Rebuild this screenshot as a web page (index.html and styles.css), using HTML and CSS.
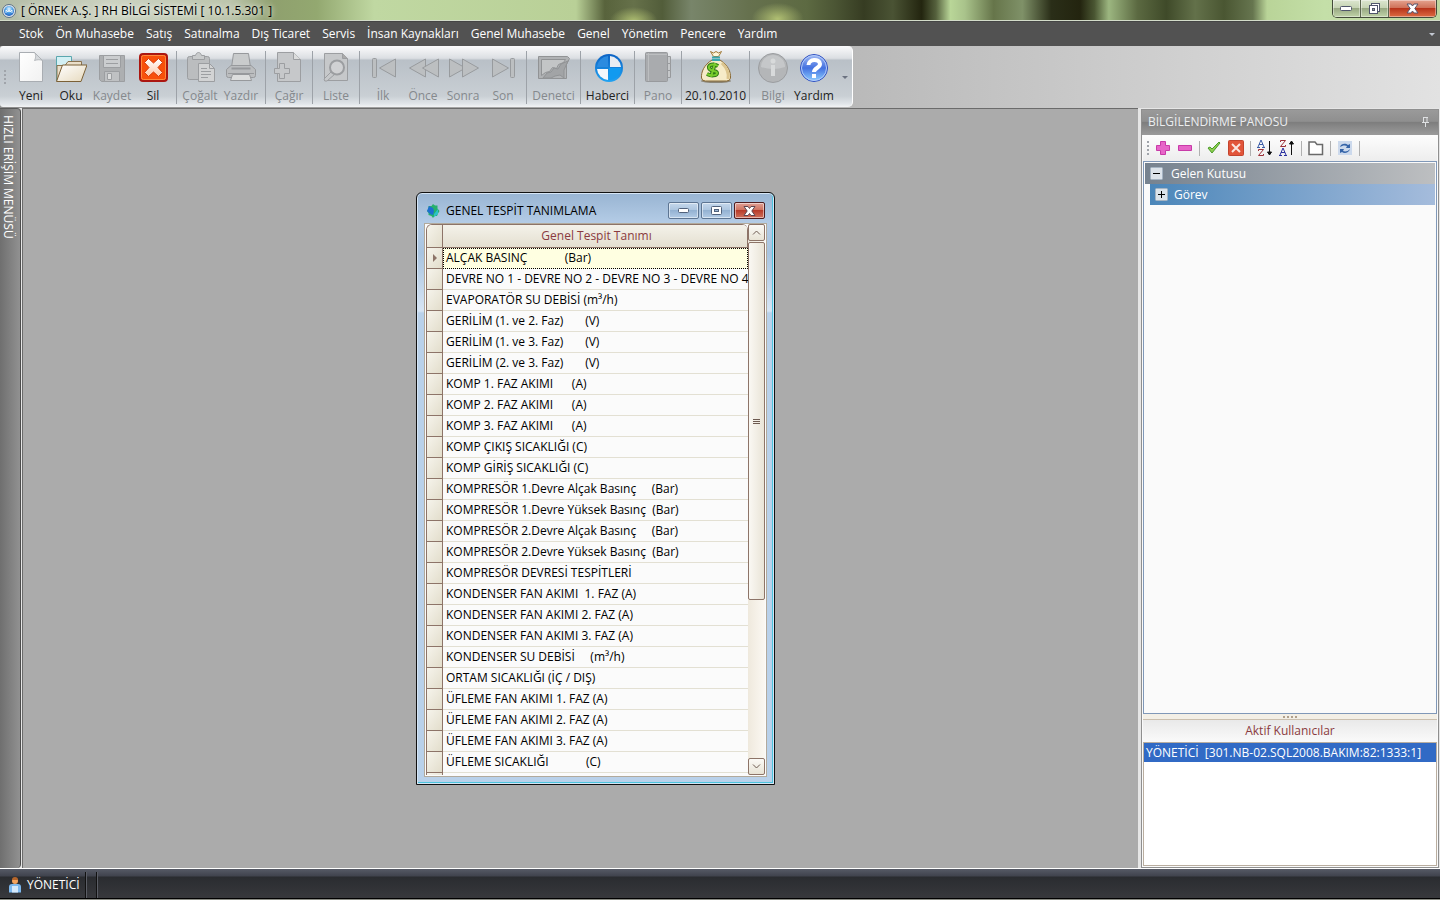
FILE: index.html
```html
<!DOCTYPE html>
<html lang="tr">
<head>
    <meta charset="UTF-8">
    <meta name="viewport" content="width=device-width, initial-scale=1.0">
    <title>RH Bilgi Sistemi</title>
    <link rel="stylesheet" href="styles.css">
</head>
<body>

<header class="titlebar">
    <svg class="app-icon" width="14" height="14" viewBox="0 0 14 14">
        <defs>
            <radialGradient id="ball" cx="50%" cy="30%" r="75%"><stop offset="0" stop-color="#e8f6ff"/><stop offset="0.5" stop-color="#4a9fe6"/><stop offset="1" stop-color="#1c55b8"/></radialGradient>
        </defs>
        <circle cx="7" cy="7" r="6.5" fill="#e4e9ee" stroke="#5b6f85"/>
        <circle cx="7" cy="7" r="5" fill="url(#ball)"/>
        <path d="M4 9V6l2 2 1-2 1 2 2-2v3" fill="none" stroke="#fff" opacity=".8"/>
    </svg>
    <h1>[ ÖRNEK A.Ş. ] RH BİLGİ SİSTEMİ [ 10.1.5.301 ]</h1>
    <div class="caption-buttons">
        <button type="button" aria-label="Simge durumuna küçült"><svg width="13" height="6" viewBox="0 0 13 6"><rect x=".5" y=".5" width="11" height="4" rx="1" fill="#fff" stroke="#50566b"/></svg></button>
        <button type="button" aria-label="Önceki boyut"><svg width="13" height="13" viewBox="0 0 13 13"><rect x="3.500" y="1.500" width="8" height="8" fill="#fff" stroke="#50566b"/><rect x="1.500" y="3.500" width="8" height="8" fill="#fff" stroke="#50566b"/><rect x="4.500" y="6.500" width="2" height="2" fill="#9aa892" stroke="#50566b"/></svg></button>
        <button type="button" class="close" aria-label="Kapat"><svg width="13" height="11" viewBox="0 0 13 11"><path d="M1 1h4l1.500 2L8 1h4L8.800 5.500 12 10H8L6.500 8 5 10H1l3.200-4.500z" fill="#fff" stroke="#59546a"/></svg></button>
    </div>
</header>

<nav class="menubar">
    <button type="button">Stok</button>
    <button type="button">Ön Muhasebe</button>
    <button type="button">Satış</button>
    <button type="button">Satınalma</button>
    <button type="button">Dış Ticaret</button>
    <button type="button">Servis</button>
    <button type="button">İnsan Kaynakları</button>
    <button type="button">Genel Muhasebe</button>
    <button type="button">Genel</button>
    <button type="button">Yönetim</button>
    <button type="button">Pencere</button>
    <button type="button">Yardım</button>
    <span class="menu-arrow"></span>
</nav>

<!-- Toolbar -->
<div class="toolbar-row">
    <div class="toolbar">
        <span class="grip"></span>
        <button type="button">
            <svg width="32" height="32" viewBox="0 0 32 32">
                <defs><linearGradient id="paper" x1="0" y1="0" x2="1" y2="1"><stop offset="0" stop-color="#fff"/><stop offset="1" stop-color="#f1f1f1"/></linearGradient></defs>
                <path d="M4.500 1.500h15l8 8v21h-23z" fill="url(#paper)" stroke="#a9adb2"/><path d="M19.500 1.500c2 3 1 6 0 8 3-1 6-1 8 0z" fill="#d6d9dc" stroke="#a9adb2" stroke-width=".8"/>
            </svg>
            <span>Yeni</span>
        </button>
        <button type="button">
            <svg width="32" height="32" viewBox="0 0 32 32">
                <defs><linearGradient id="folder" x1="0" y1="0" x2="1" y2="1"><stop offset="0" stop-color="#fff"/><stop offset="1" stop-color="#e6d9bd"/></linearGradient></defs>
                <path d="M1.500 30V5.500h15v6" fill="#d3f0f4" stroke="#5aa7af"/><path d="M2 30V14.500h8l3-4h13.500v5" fill="#eadfca" stroke="#8a7350"/><path d="M1.500 30.500l6-16.500h24.500l-6 16.500z" fill="url(#folder)" stroke="#7b6036"/>
            </svg>
            <span>Oku</span>
        </button>
        <button type="button" class="medium" disabled>
            <svg width="32" height="32" viewBox="0 0 32 32" fill="#bfc1c3" stroke="#9c9ea1">
                <path d="M3.500 4.500h25v26h-23l-2-2z" fill="#adafb1"/><path d="M7.500 4.500h17v12h-17z" fill="#cbcdcf"/><path d="M10 8.500h12M10 12.500h12"/><path d="M8.500 20.500h15v10h-15z"/><path d="M11.500 22.500h4v6h-4z" fill="#dcdddd"/>
            </svg>
            <span>Kaydet</span>
        </button>
        <button type="button">
            <svg width="32" height="32" viewBox="0 0 32 32">
                <defs><linearGradient id="cross" x1="0" y1="0" x2="0" y2="1"><stop offset="0" stop-color="#fff"/><stop offset="1" stop-color="#ffc9a8"/></linearGradient></defs>
                <rect x="3" y="3" width="27" height="27" rx="3" fill="#f8500a" stroke="#ab1610" stroke-width="2"/><rect x="4.500" y="4.500" width="24" height="24" rx="2" fill="none" stroke="#ff8a3c"/>
                <path d="M11.500 7.500l5 4.500 5-4.500 4 4-4.500 5 4.500 5-4 4-5-4.500-5 4.500-4-4 4.500-5-4.500-5z" fill="url(#cross)" stroke="#d83a08"/>
            </svg>
            <span>Sil</span>
        </button>
        <i class="sep"></i>
        <button type="button" disabled>
            <svg width="32" height="32" viewBox="0 0 32 32" fill="#bbbdbf" stroke="#9c9ea1">
                <rect x="3.500" y="5.500" width="22" height="23" rx="2"/><path d="M8.500 8.500v-4h3c1-4 5-4 6 0h3v4z" fill="#c9cbcc"/><path d="M14.500 12.500h11l5 5v13h-16z" fill="#d2d3d4"/><path d="M25.500 12.500v5h5" fill="none"/><path d="M17 17.500h6M17 20.500h10M17 23.500h10M17 26.500h7"/>
            </svg>
            <span>Çoğalt</span>
        </button>
        <button type="button" class="medium" disabled>
            <svg width="32" height="32" viewBox="0 0 32 32" fill="#bbbdbf" stroke="#97999c">
                <path d="M8.500 2.500h15l2 14h-19z" fill="#c9cbcc"/><path d="M6 14.500h20l4.500 4v6q0 2-2 2h-25q-2 0-2-2v-6z"/><path d="M6.500 17.500h19" stroke-width="2"/><path d="M3 22.500h26"/><path d="M7.500 23.500h17l2 6h-21z" fill="#dcdddd"/>
            </svg>
            <span>Yazdır</span>
        </button>
        <i class="sep"></i>
        <button type="button" disabled>
            <svg width="32" height="32" viewBox="0 0 32 32" fill="#c6c8ca" stroke="#9c9ea1">
                <path d="M4.500 1.500h16l7 7v22h-23z"/><path d="M20.500 1.500v7h7" fill="#dcdddd"/><path d="M6.500 12.500h5v5h5v5h-5v5h-5v-5h-5v-5h5z"/>
            </svg>
            <span>Çağır</span>
        </button>
        <i class="sep"></i>
        <button type="button" disabled>
            <svg width="32" height="32" viewBox="0 0 32 32" fill="#c6c8ca" stroke="#9c9ea1">
                <path d="M4.500 2.500h18l5 5v22h-23z"/><path d="M22.500 2.500v5h5" fill="#aaa"/><path d="M12 20l3 3-8 7q-3 1-3-2z"/><circle cx="17" cy="16.500" r="7" fill="#d0d1d3" stroke-width="2"/>
            </svg>
            <span>Liste</span>
        </button>
        <i class="sep"></i>
        <button type="button" disabled>
            <svg width="32" height="32" viewBox="0 0 32 32" fill="#bcbfc1" stroke="#989b9e"><rect x="5.500" y="7.500" width="4" height="19" rx="1"/><path d="M28.500 8v18l-16-9z"/></svg>
            <span>İlk</span>
        </button>
        <button type="button" disabled>
            <svg width="32" height="32" viewBox="0 0 32 32" fill="#bcbfc1" stroke="#989b9e"><path d="M18.500 8v18l-16-9z"/><path d="M31.500 8v18l-16-9z"/></svg>
            <span>Önce</span>
        </button>
        <button type="button" disabled>
            <svg width="32" height="32" viewBox="0 0 32 32" fill="#bcbfc1" stroke="#989b9e"><path d="M2.500 8v18l16-9z"/><path d="M15.500 8v18l16-9z"/></svg>
            <span>Sonra</span>
        </button>
        <button type="button" disabled>
            <svg width="32" height="32" viewBox="0 0 32 32" fill="#bcbfc1" stroke="#989b9e"><path d="M5.500 8v18l16-9z"/><rect x="23.500" y="7.500" width="4" height="19" rx="1"/></svg>
            <span>Son</span>
        </button>
        <i class="sep"></i>
        <button type="button" class="wide" disabled>
            <svg width="32" height="32" viewBox="0 0 32 32" fill="#b0b2b4" stroke="#919395">
                <path d="M.5 5.500h29l2 2-3 6v14H.5z"/><path d="M3.500 8.500h24l-2 3-5 2-2 4-4-1-3 4-4 1-4 3z" fill="#c3c5c6"/><path d="M5 27l4-5 4-1 3-4 4 1 3-5 7-3-4 9v8l-4-3-5 1-4 2z" fill="#a2a4a6"/>
            </svg>
            <span>Denetci</span>
        </button>
        <i class="sep"></i>
        <button type="button" class="wide">
            <svg width="32" height="32" viewBox="0 0 32 32">
                <defs><linearGradient id="bluegl" x1="0" y1="0" x2="0" y2="1"><stop offset="0" stop-color="#0c62c4"/><stop offset="1" stop-color="#21a3f2"/></linearGradient></defs>
                <circle cx="17" cy="17" r="14" fill="url(#bluegl)"/><path d="M5 16A12 12 0 0 1 16 5v11z" fill="#2b8be0"/><path d="M18 5a12 12 0 0 1 11 11H18z" fill="#e9edf2"/><path d="M16 29A12 12 0 0 1 5 18h11z" fill="#f6f8fb"/><path d="M17 17h12a12 12 0 0 1-12 12z" fill="#119af0"/>
            </svg>
            <span>Haberci</span>
        </button>
        <i class="sep"></i>
        <button type="button" disabled>
            <svg width="32" height="32" viewBox="0 0 32 32" fill="#a9abae" stroke="#989a9d">
                <path d="M24 5.500h4.500v7H24zM24 12.500h4.500v7H24zM24 19.500h4.500v7H24z" fill="#c6c8ca"/><rect x="3.500" y="1.500" width="22" height="29" rx="1"/><path d="M6.500 2v28M4 3.500h21" stroke="#bcbec0"/>
            </svg>
            <span>Pano</span>
        </button>
        <i class="sep"></i>
        <button type="button" class="date">
            <svg width="32" height="32" viewBox="0 0 32 32">
                <ellipse cx="16" cy="30" rx="15" ry="2" fill="#8b8577"/>
                <path d="M12 9C4 14 1 21 1.500 27q.5 3 4 3h21q3.500 0 4-3C31 21 28 14 20 9z" fill="#f6ebc8" stroke="#8a6a35"/>
                <path d="M22 12c5 5 7 11 6 16" fill="none" stroke="#dcc58e" stroke-width="3"/>
                <path d="M10.500.5l3 5h5l3-5-3 1.500-2.500-1.500L13.500 2z" fill="#fff6d9" stroke="#a17a38"/><path d="M12 6.500h8M12 9h8" stroke="#3aa7ae" stroke-width="2"/>
                <path d="M18 15c-5-3-10-1-9 2 1 4 8 2 8 5 0 3-6 3-10 1M15 12l-4 14" fill="none" stroke="#2f7a16" stroke-width="4"/><path d="M18 15c-5-3-10-1-9 2 1 4 8 2 8 5 0 3-6 3-10 1M15 12l-4 14" fill="none" stroke="#79cc2c" stroke-width="2"/>
            </svg>
            <span>20.10.2010</span>
        </button>
        <i class="sep"></i>
        <button type="button" disabled>
            <svg width="32" height="32" viewBox="0 0 32 32">
                <circle cx="16" cy="17" r="14.500" fill="#b4b6b8" stroke="#9b9da0"/><path d="M4 16a12 12 0 0 1 24 0q-12 4-24 0z" fill="#c5c7c9"/><rect x="14" y="14" width="4" height="11" fill="#d8dadb"/><circle cx="16" cy="10" r="2.500" fill="#d8dadb"/>
            </svg>
            <span>Bilgi</span>
        </button>
        <button type="button" class="medium">
            <svg width="32" height="32" viewBox="0 0 32 32">
                <defs><linearGradient id="help" x1="0" y1="0" x2="0" y2="1"><stop offset="0" stop-color="#a5bdf5"/><stop offset="0.5" stop-color="#4471e0"/><stop offset="1" stop-color="#8fd0ff"/></linearGradient></defs>
                <circle cx="16" cy="17" r="13.500" fill="url(#help)" stroke="#2f4fc0"/><circle cx="16" cy="17" r="12.500" fill="none" stroke="#b4ccfa"/>
                <path d="M10.500 14c0-6 11-7 11.500-1 0 4-6 4-6 8" fill="none" stroke="#fff" stroke-width="4"/><rect x="14" y="23" width="4" height="4" fill="#fff"/>
            </svg>
            <span>Yardım</span>
        </button>
        <span class="more-arrow"></span>
    </div>
</div>

<div class="workspace">
    <aside class="quick-access"><button type="button">HIZLI ERİŞİM MENÜSÜ</button></aside>

    <main class="mdi">
        <section class="window">
            <div class="window-title">
                <svg width="14" height="14" viewBox="0 0 14 14"><path d="M7 0l2 1.500 2.500 0 0 3 2 2.500-1.500 2.500-1 2.500-2.500 0L7 14l-1.500-2-3-1V9L1 7l1.500-2L2.500 2l3 0z" fill="#27b06d"/><path d="M3 2l4 2 1 3-1 4-3-1L1 7z" fill="#1d6fd0"/><path d="M8 10l4-5 0 5-4 3z" fill="#2bc2c9"/></svg>
                <h2>GENEL TESPİT TANIMLAMA</h2>
                <button type="button" aria-label="Küçült"><svg width="13" height="6" viewBox="0 0 13 6"><rect x="1.500" y=".500" width="10" height="4" rx="1" fill="#fff" stroke="#50617b"/></svg></button>
                <button type="button" aria-label="Büyüt"><svg width="13" height="9" viewBox="0 0 13 9"><rect x="1.500" y=".500" width="10" height="8" rx="1" fill="#fff" stroke="#50617b"/><rect x="4.500" y="3.500" width="4" height="2" fill="#9bb5d1" stroke="#50617b"/></svg></button>
                <button type="button" class="close" aria-label="Kapat"><svg width="13" height="10" viewBox="0 0 13 10"><path d="M1 .5h4l1.500 2L8 .5h4L8.800 5 12 9.500H8l-1.500-2-1.500 2H1L4.200 5z" fill="#fff" stroke="#5d4650"/></svg></button>
            </div>
            <div class="grid">
                <div class="grid-body">
                    <table>
                        <thead>
                            <tr><th class="marker"></th><th>Genel Tespit Tanımı</th></tr>
                        </thead>
                        <tbody>
                            <tr class="current"><td class="marker"></td><td>ALÇAK BASINÇ            (Bar)</td></tr>
                            <tr><td class="marker"></td><td>DEVRE NO 1 - DEVRE NO 2 - DEVRE NO 3 - DEVRE NO 4</td></tr>
                            <tr><td class="marker"></td><td>EVAPORATÖR SU DEBİSİ (m³/h)</td></tr>
                            <tr><td class="marker"></td><td>GERİLİM (1. ve 2. Faz)       (V)</td></tr>
                            <tr><td class="marker"></td><td>GERİLİM (1. ve 3. Faz)       (V)</td></tr>
                            <tr><td class="marker"></td><td>GERİLİM (2. ve 3. Faz)       (V)</td></tr>
                            <tr><td class="marker"></td><td>KOMP 1. FAZ AKIMI      (A)</td></tr>
                            <tr><td class="marker"></td><td>KOMP 2. FAZ AKIMI      (A)</td></tr>
                            <tr><td class="marker"></td><td>KOMP 3. FAZ AKIMI      (A)</td></tr>
                            <tr><td class="marker"></td><td>KOMP ÇIKIŞ SICAKLIĞI (C)</td></tr>
                            <tr><td class="marker"></td><td>KOMP GİRİŞ SICAKLIĞI (C)</td></tr>
                            <tr><td class="marker"></td><td>KOMPRESÖR 1.Devre Alçak Basınç     (Bar)</td></tr>
                            <tr><td class="marker"></td><td>KOMPRESÖR 1.Devre Yüksek Basınç  (Bar)</td></tr>
                            <tr><td class="marker"></td><td>KOMPRESÖR 2.Devre Alçak Basınç     (Bar)</td></tr>
                            <tr><td class="marker"></td><td>KOMPRESÖR 2.Devre Yüksek Basınç  (Bar)</td></tr>
                            <tr><td class="marker"></td><td>KOMPRESÖR DEVRESİ TESPİTLERİ</td></tr>
                            <tr><td class="marker"></td><td>KONDENSER FAN AKIMI  1. FAZ (A)</td></tr>
                            <tr><td class="marker"></td><td>KONDENSER FAN AKIMI 2. FAZ (A)</td></tr>
                            <tr><td class="marker"></td><td>KONDENSER FAN AKIMI 3. FAZ (A)</td></tr>
                            <tr><td class="marker"></td><td>KONDENSER SU DEBİSİ     (m³/h)</td></tr>
                            <tr><td class="marker"></td><td>ORTAM SICAKLIĞI (İÇ / DIŞ)</td></tr>
                            <tr><td class="marker"></td><td>ÜFLEME FAN AKIMI 1. FAZ (A)</td></tr>
                            <tr><td class="marker"></td><td>ÜFLEME FAN AKIMI 2. FAZ (A)</td></tr>
                            <tr><td class="marker"></td><td>ÜFLEME FAN AKIMI 3. FAZ (A)</td></tr>
                            <tr><td class="marker"></td><td>ÜFLEME SICAKLIĞI            (C)</td></tr>
                            <tr><td class="marker"></td><td></td></tr>
                        </tbody>
                    </table>
                </div>
                <div class="scrollbar">
                    <button type="button" aria-label="Yukarı"><svg width="9" height="5" viewBox="0 0 9 5"><path d="M1 4.500L4.500 1 8 4.500" fill="none" stroke="#6d5a50"/></svg></button>
                    <div class="thumb"></div>
                    <button type="button" aria-label="Aşağı"><svg width="9" height="5" viewBox="0 0 9 5"><path d="M1 .5L4.500 4 8 .5" fill="none" stroke="#6d5a50"/></svg></button>
                </div>
            </div>
        </section>
    </main>

    <aside class="panel">
        <div class="panel-title">
            <h2>BİLGİLENDİRME PANOSU</h2>
            <svg width="9" height="10" viewBox="0 0 9 10"><path d="M2.500 0v5.500M6 0v5.500M2 .5h5M1 5.500h7M4.500 6v4" fill="none" stroke="#dfe1e3"/></svg>
        </div>
        <div class="panel-tools">
            <span class="grip"></span>
            <button type="button" aria-label="Ekle"><svg width="16" height="16" viewBox="0 0 16 16"><path d="M5.500 1.500h5v4h4v5h-4v4h-5v-4h-4v-5h4z" fill="#e765c8" stroke="#c83ba8"/></svg></button>
            <button type="button" aria-label="Çıkar"><svg width="16" height="16" viewBox="0 0 16 16"><path d="M1.500 5.500h13v5h-13z" fill="#e765c8" stroke="#c83ba8"/></svg></button>
            <i class="line"></i>
            <button type="button" aria-label="Onayla"><svg width="16" height="16" viewBox="0 0 16 16"><path d="M2 8l2-1 2 2 7-7 1 1-8 10z" fill="#8ed04f" stroke="#4b9a2a"/></svg></button>
            <button type="button" aria-label="İptal"><svg width="16" height="16" viewBox="0 0 16 16"><rect x=".5" y=".5" width="15" height="15" rx="1" fill="#e2553a" stroke="#c3442e"/><path d="M4 4l8 8M12 4l-8 8" stroke="#fbe6e0" stroke-width="2"/></svg></button>
            <i class="line"></i>
            <button type="button" aria-label="Artan sırala"><svg width="16" height="18" viewBox="0 0 16 18"><path d="M1 8l3-7 3 7M2 5.500h4M0 8.500h3M5 8.500h3" fill="none" stroke="#3d5ea8"/><path d="M1.500 12v-1.500h5L1.500 16.500h5V15" fill="none" stroke="#9c3038"/><path d="M12.500 2v12M10.500 13l2 3 2-3z" fill="#111" stroke="#111"/></svg></button>
            <button type="button" aria-label="Azalan sırala"><svg width="16" height="18" viewBox="0 0 16 18"><path d="M1.500 3V1.500h5l-5 6h5V6" fill="none" stroke="#9c3038"/><path d="M1 16l3-7 3 7M2 13.500h4M0 16.500h3M5 16.500h3" fill="none" stroke="#2b31a0"/><path d="M12.500 16V4M10.500 5l2-3 2 3z" fill="#111" stroke="#111"/></svg></button>
            <i class="line"></i>
            <button type="button" aria-label="Klasör"><svg width="16" height="16" viewBox="0 0 16 16"><path d="M1 14.500V2h6l2 2.500h5.500v10z" fill="#fff" stroke="#6a6a6a" stroke-width="1.500"/></svg></button>
            <i class="line"></i>
            <button type="button" aria-label="Yenile"><svg width="16" height="16" viewBox="0 0 16 16"><rect x="1" y="1" width="14" height="14" fill="#ccd9ec"/><path d="M3 7c1-4 6-4 8-2l2-1v4H9l1-2C8 5 5 5.500 3 7zM13 9c-1 4-6 5-8 3l-2 1V9h4l-1 2c2 1 5 .5 7-2z" fill="#3564a8"/></svg></button>
            <i class="line"></i>
        </div>
        <div class="tree">
            <div class="tree-group">
                <svg width="13" height="13" viewBox="0 0 13 13"><rect x=".5" y=".5" width="12" height="12" rx="1" fill="#dce3ea" stroke="#a5b4c3"/><path d="M3 6.500h7" stroke="#000"/></svg>
                <span>Gelen Kutusu</span>
            </div>
            <div class="tree-item">
                <svg width="13" height="13" viewBox="0 0 13 13"><rect x=".5" y=".5" width="12" height="12" rx="1" fill="#dce3ea" stroke="#a5b4c3"/><path d="M3 6.500h7M6.500 3v7" stroke="#000"/></svg>
                <span>Görev</span>
            </div>
        </div>
        <div class="splitter"></div>
        <h3>Aktif Kullanıcılar</h3>
        <ul class="users">
            <li>YÖNETİCİ  [301.NB-02.SQL2008.BAKIM:82:1333:1]</li>
        </ul>
    </aside>
</div>

<footer class="statusbar">
    <svg width="12" height="16" viewBox="0 0 12 16"><path d="M0 15.500V10q0-3 3-3h6q3 0 3 3v5.500z" fill="#7db8ee"/><path d="M3 9h6v6.500H3z" fill="#d5e9fb"/><circle cx="6" cy="4" r="3" fill="#f2a25c"/><path d="M3 3a3 3 0 0 1 6 0z" fill="#b5652b"/></svg>
    <span class="user">YÖNETİCİ</span>
    <i></i>
    <i></i>
</footer>

</body>
</html>
```
FILE: styles.css
```css
/* General Styles */
* {
    box-sizing: border-box;
}
body {
    font-family: "Open Sans", "Noto Sans", sans-serif;
    font-size: 12px;
    line-height: 16px;
    margin: 0;
    height: 100vh;
    display: flex;
    flex-direction: column;
    overflow: hidden;
    background: #e2e2e2;
    color: #000;
}
h1, h2, h3, ul {
    margin: 0;
    padding: 0;
    font-size: 12px;
    font-weight: normal;
}
button {
    font: inherit;
    color: inherit;
    border: none;
    background: none;
    padding: 0;
    margin: 0;
}
svg {
    display: block;
    flex: none;
}

/* Title bar */
.titlebar {
    height: 22px;
    flex: none;
    display: flex;
    align-items: flex-start;
    padding: 3px 3px 0 2px;
    border-bottom: 1px solid #454545;
    box-shadow: inset 0 -1px #d3dcca;
    background:
        radial-gradient(ellipse 24px 14px at 44% 100%, #adbd70, transparent),
        radial-gradient(ellipse 26px 16px at 54% 90%, #b0bf72, transparent),
        linear-gradient(to right, #b3bca6 0%, #ccd3c1 8%, #bcc5ac 16%, #8fa06e 19%, #93a870 22%, #c0d8a2 26%, #b9d097 40%, #58633c 42%, #66714a 44%, #525d3a 46%, #78856a 48%, #66714e 52%, #5d6a42 56%, #4b5534 58%, #363c22 60%, #4a5334 62%, #23250f 64%, #55613d 65%, #b9d698 66%, #a9c38b 67%, #66754a 69%, #7f9168 71%, #2a2e18 73%, #23240f 75%, #4a5632 76%, #9cb680 77%, #5b6941 79%, #3f4a29 81%, #63714a 83%, #4a5632 85%, #66754f 87%, #b9d498 88%, #c4dfa8 92%, #bdd79f 100%);
}
.app-icon {
    margin: 1px 5px 0 0;
}
.titlebar h1 {
    flex: 1;
    text-shadow: 0 0 5px #fff, 0 0 8px rgba(255, 255, 255, 0.6);
}
.caption-buttons {
    display: flex;
    margin-top: -3px;
    border: 1px solid #434b39;
    border-top: none;
    border-radius: 0 0 5px 5px;
    overflow: hidden;
}
.caption-buttons button {
    width: 28px;
    height: 17px;
    display: flex;
    align-items: center;
    justify-content: center;
    border-right: 1px solid #5c664f;
    background: linear-gradient(#dce6cf, #c6d4b4 45%, #98a983 50%, #c0d3a8);
    box-shadow: inset 0 0 0 1px rgba(255, 255, 255, 0.4);
}
.caption-buttons .close {
    width: 47px;
    border: none;
    background: linear-gradient(#e5a48f, #cf7259 45%, #b8341a 50%, #dd6c42);
}

/* Menu bar */
.menubar {
    height: 24px;
    flex: none;
    display: flex;
    align-items: center;
    gap: 12px;
    padding: 0 5px 0 19px;
    background: #525252;
    color: #fff;
}
.menubar button {
    white-space: nowrap;
}
.menu-arrow, .more-arrow {
    border: 3px solid transparent;
    border-top-color: #c3c8d2;
    border-bottom: none;
}
.menu-arrow {
    margin-left: auto;
}

/* Toolbar */
.toolbar-row {
    height: 62px;
    flex: none;
    display: flex;
    background: linear-gradient(to right, #8c8c8c, #bababa 60%, #e2e2e2);
}
.toolbar {
    height: 61px;
    display: flex;
    padding: 5px 4px 0;
    border-right: 1px solid #fff;
    border-radius: 3px 5px 5px 3px;
    background: linear-gradient(#fbfbfc 0, #dcdfe3 12px, #d2d6db 13px, #b9c0c7 14px, #c9cfd4 50px, #e2e6ea 58px, #f3f4f5);
}
.grip {
    width: 2px;
    height: 14px;
    background: repeating-linear-gradient(#a0a4aa 0 2px, transparent 2px 4px);
}
.toolbar .grip {
    margin: 19px 5px 0 0;
}
.toolbar button {
    width: 40px;
    height: 53px;
    display: flex;
    flex-direction: column;
    align-items: center;
    gap: 5px;
    white-space: nowrap;
    color: #222;
}
.toolbar button:disabled {
    color: #85898d;
}
.toolbar .medium {
    width: 42px;
}
.toolbar .wide {
    width: 47px;
}
.toolbar .date {
    width: 61px;
}
.sep {
    width: 1px;
    height: 53px;
    margin: 0 3px;
    background: #9da2a8;
}
.more-arrow {
    margin: 25px 0 0 7px;
    height: 3px;
    border-top-color: #6b7280;
}

/* Workspace */
.workspace {
    flex: 1;
    min-height: 0;
    display: flex;
    background: #e6e6e6;
}
.quick-access {
    width: 21px;
    flex: none;
    border-right: 1px solid #4d4d4d;
    border-top: 1px solid #5a5a5a;
    border-radius: 0 4px 4px 0;
    background: linear-gradient(to right, #6f6f6f, #919191);
    color: #fff;
}
.quick-access button {
    writing-mode: vertical-rl;
    width: 16px;
    margin-top: 6px;
    white-space: nowrap;
}
.mdi {
    flex: 1;
    position: relative;
    margin-left: 1px;
    border-left: 1px solid #6b6b6b;
    border-top: 1px solid #6b6b6b;
    background: #ababab;
}

/* Window */
.window {
    position: absolute;
    left: 393px;
    top: 83px;
    width: 359px;
    height: 593px;
    display: flex;
    flex-direction: column;
    padding: 0 7px 7px;
    border: 1px solid #111;
    border-radius: 6px 6px 0 0;
    box-shadow: inset 0 0 0 1px #d5e5f5, inset -1px -1px 0 1px #4cc3dc;
    background: linear-gradient(#98b4d2, #b4cce6 30px, #a9c4e0 60px, #d7e5f4 118px, #b9d1ea 120px);
}
.window-title {
    height: 30px;
    flex: none;
    display: flex;
    align-items: center;
    gap: 2px;
    padding: 5px 2px 0;
}
.window-title h2 {
    flex: 1;
    margin-left: 4px;
}
.window-title button {
    width: 31px;
    height: 17px;
    display: flex;
    align-items: center;
    justify-content: center;
    border: 1px solid #5d7592;
    border-radius: 2px;
    box-shadow: inset 0 0 0 1px rgba(255, 255, 255, 0.5);
    background: linear-gradient(#c5d8ec, #adc6e0 45%, #94b2d2 50%, #b3cce6);
}
.window-title .close {
    border-color: #4f1d20;
    background: linear-gradient(#e0a096, #cf7462 45%, #b83c2a 50%, #d0705c);
}
.grid {
    flex: 1;
    min-height: 0;
    display: flex;
    border: 1px solid #b2aa9c;
    background: #fbfbfb;
    padding: 0 1px 1px;
}
.grid-body {
    flex: 1;
    overflow: hidden;
    border-top: 1px solid #8d7468;
    border-left: 1px solid #8d7468;
    border-radius: 6px 6px 0 0;
}
table {
    width: 100%;
    border-collapse: separate;
    border-spacing: 0;
    table-layout: fixed;
}
th, td {
    height: 21px;
    padding: 0 0 0 3px;
    font-weight: normal;
    text-align: left;
    white-space: pre;
    border-bottom: 1px solid #e3e0d3;
}
th {
    height: 23px;
    text-align: center;
    color: #8a3b40;
    border-bottom-color: #8d7468;
    border-right: 1px solid #8d7468;
    background: linear-gradient(#f4f2ea, #e4dfd0);
}
.marker {
    width: 16px;
    padding: 0;
    border-right: 1px solid #8d7468;
    border-bottom-color: #8d7468;
    background: linear-gradient(to bottom right, #f6f4ec, #e2ddcb);
}
.current td:not(.marker) {
    background: #ffffe1;
    outline: 1px dotted #000;
    outline-offset: -1px;
    border-bottom-color: #ffffe1;
}
.current .marker::before {
    content: "";
    display: block;
    width: 4px;
    margin-left: 6px;
    border: 4px solid transparent;
    border-left-color: #8d7468;
    border-right: none;
}
.scrollbar {
    width: 17px;
    flex: none;
    display: flex;
    flex-direction: column;
    background: linear-gradient(to right, #efe9dd, #fbf8f2);
}
.scrollbar button {
    height: 17px;
    flex: none;
    display: flex;
    align-items: center;
    justify-content: center;
    border: 1px solid #8d7468;
    border-radius: 2px;
    background: linear-gradient(#fbfaf6, #e8e3d5);
}
.scrollbar button:last-child {
    margin-top: auto;
}
.thumb {
    height: 358px;
    margin-top: 1px;
    border: 1px solid #8d7468;
    border-radius: 2px;
    background: repeating-linear-gradient(#6d5a50 0 1px, transparent 1px 2px) center / 7px 5px no-repeat, linear-gradient(to right, #faf8f3, #e9e4d7);
}

/* Information panel */
.panel {
    width: 298px;
    flex: none;
    display: flex;
    flex-direction: column;
    margin: 1px 1px 0 3px;
    padding: 0 1px 1px;
    border: 1px solid #8f8f8f;
    background: #fafafa;
}
.panel-title {
    height: 25px;
    flex: none;
    display: flex;
    align-items: center;
    justify-content: space-between;
    margin: 0 -1px;
    padding: 0 8px 2px 6px;
    color: #eceef0;
    background: linear-gradient(#9a9a9a, #8f8f8f 45%, #7e7e7e 50%, #9b9b9b);
}
.panel-tools {
    height: 26px;
    flex: none;
    display: flex;
    align-items: center;
    gap: 6px;
    padding-left: 4px;
    background: linear-gradient(#fdfdfd, #ededed);
}
.line {
    width: 1px;
    height: 15px;
    background: #b0b0b0;
}
.tree {
    flex: 1;
    padding: 1px;
    border: 1px solid #8098b8;
    background: #fafafa;
    color: #fff;
}
.tree-group, .tree-item {
    height: 21px;
    display: flex;
    align-items: center;
    padding-left: 5px;
}
.tree-group {
    gap: 8px;
    background: linear-gradient(to right, #76828f, #bdbfc1);
}
.tree-item {
    gap: 6px;
    margin-left: 5px;
    background: linear-gradient(to right, #4b86b9, #a5bcdc);
}
.splitter {
    height: 6px;
    flex: none;
    border-bottom: 1px solid #cbbfae;
    background: repeating-linear-gradient(to right, #b0a08c 0 2px, transparent 2px 4px) center 2px / 14px 2px no-repeat, #f3efe6;
}
.panel h3 {
    height: 22px;
    flex: none;
    line-height: 22px;
    text-align: center;
    color: #8a3b40;
    background: linear-gradient(#e9e9e9, #fafafa);
}
.users {
    height: 124px;
    flex: none;
    list-style: none;
    border: 1px solid #b9aea0;
    background: #fff;
}
.users li {
    height: 19px;
    line-height: 19px;
    padding: 0 2px;
    white-space: pre;
    color: #fff;
    background: #316ac5;
}

/* Status bar */
.statusbar {
    height: 32px;
    flex: none;
    display: flex;
    align-items: center;
    padding: 1px 9px 0;
    border-top: 1px solid #fff;
    border-bottom: 1px solid #8b8d85;
    box-shadow: inset 0 -1px #000;
    background: linear-gradient(#565a66, #40434d 7px, #2a2c30 8px, #38393d);
    color: #fff;
}
.statusbar .user {
    margin: 0 5px 0 6px;
}
.statusbar i {
    width: 2px;
    height: 26px;
    margin-right: 9px;
    border-left: 1px solid #111;
    border-right: 1px solid #5b5e66;
}
```
